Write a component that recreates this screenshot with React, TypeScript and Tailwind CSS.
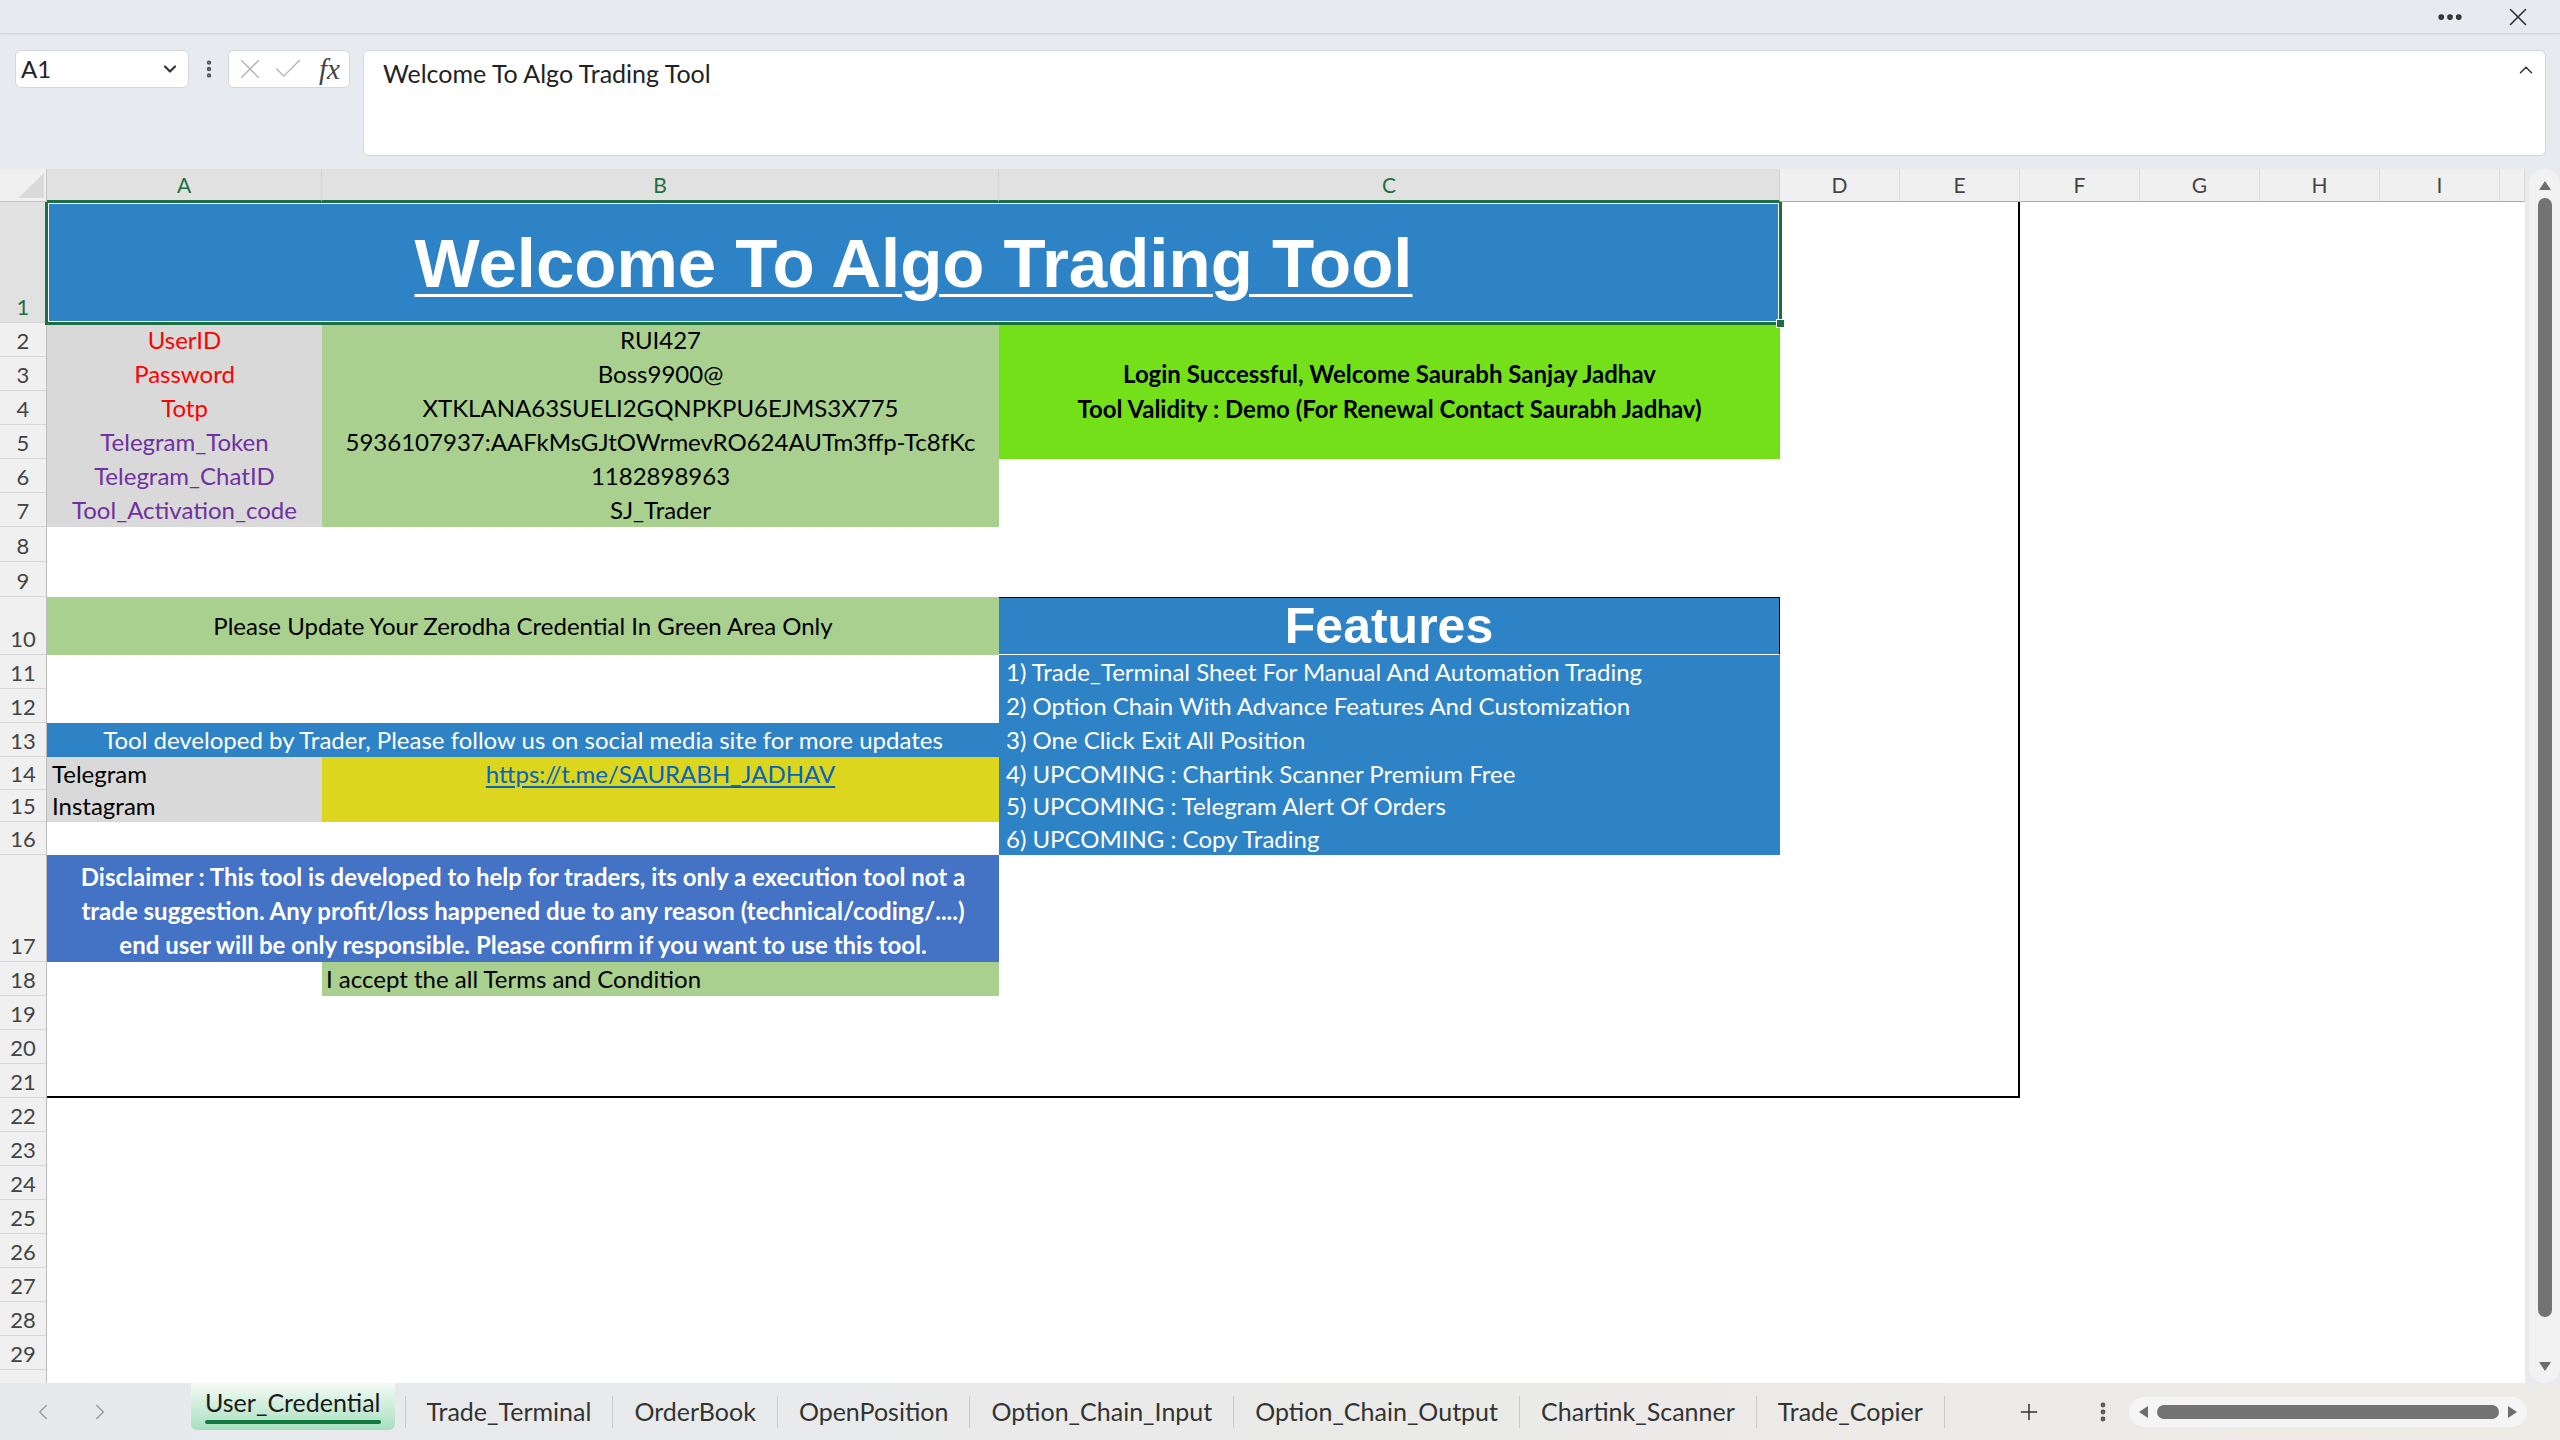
import { ChevronDown, ChevronUp, ChevronLeft, ChevronRight, X, Check, Plus, MoreHorizontal, MoreVertical } from 'lucide-react'

const columns = [
  { label: 'A', w: 'w-[275px]', sel: true },
  { label: 'B', w: 'w-[677px]', sel: true },
  { label: 'C', w: 'w-[781px]', sel: true },
  { label: 'D', w: 'w-[120px]', sel: false },
  { label: 'E', w: 'w-[120px]', sel: false },
  { label: 'F', w: 'w-[120px]', sel: false },
  { label: 'G', w: 'w-[120px]', sel: false },
  { label: 'H', w: 'w-[120px]', sel: false },
  { label: 'I', w: 'w-[120px]', sel: false },
  { label: '', w: 'w-[25px]', sel: false },
]

const rows = [
  { n: 1, h: 'h-[121px]' },
  { n: 2, h: 'h-[34px]' },
  { n: 3, h: 'h-[34px]' },
  { n: 4, h: 'h-[34px]' },
  { n: 5, h: 'h-[34px]' },
  { n: 6, h: 'h-[34px]' },
  { n: 7, h: 'h-[34px]' },
  { n: 8, h: 'h-[35px]' },
  { n: 9, h: 'h-[35px]' },
  { n: 10, h: 'h-[58px]' },
  { n: 11, h: 'h-[34px]' },
  { n: 12, h: 'h-[34px]' },
  { n: 13, h: 'h-[34px]' },
  { n: 14, h: 'h-[33px]' },
  { n: 15, h: 'h-[32px]' },
  { n: 16, h: 'h-[33px]' },
  { n: 17, h: 'h-[107px]' },
  { n: 18, h: 'h-[34px]' },
  { n: 19, h: 'h-[34px]' },
  { n: 20, h: 'h-[34px]' },
  { n: 21, h: 'h-[34px]' },
  { n: 22, h: 'h-[34px]' },
  { n: 23, h: 'h-[34px]' },
  { n: 24, h: 'h-[34px]' },
  { n: 25, h: 'h-[34px]' },
  { n: 26, h: 'h-[34px]' },
  { n: 27, h: 'h-[34px]' },
  { n: 28, h: 'h-[34px]' },
  { n: 29, h: 'h-[34px]' },
]

const credentials = [
  { label: 'UserID', value: 'RUI427', color: 'text-[#ff0000]' },
  { label: 'Password', value: 'Boss9900@', color: 'text-[#ff0000]' },
  { label: 'Totp', value: 'XTKLANA63SUELI2GQNPKPU6EJMS3X775', color: 'text-[#ff0000]' },
  { label: 'Telegram_Token', value: '5936107937:AAFkMsGJtOWrmevRO624AUTm3ffp-Tc8fKc', color: 'text-[#7030a0]' },
  { label: 'Telegram_ChatID', value: '1182898963', color: 'text-[#7030a0]' },
  { label: 'Tool_Activation_code', value: 'SJ_Trader', color: 'text-[#7030a0]' },
]

const features = [
  { text: '1) Trade_Terminal Sheet For Manual And Automation Trading', h: 'h-[34px]' },
  { text: '2) Option Chain With Advance Features And Customization', h: 'h-[34px]' },
  { text: '3) One Click Exit All Position', h: 'h-[34px]' },
  { text: '4) UPCOMING : Chartink Scanner Premium Free', h: 'h-[33px]' },
  { text: '5) UPCOMING : Telegram Alert Of Orders', h: 'h-[32px]' },
  { text: '6) UPCOMING : Copy Trading', h: 'h-[33px]' },
]

const sheets = ['Trade_Terminal', 'OrderBook', 'OpenPosition', 'Option_Chain_Input', 'Option_Chain_Output', 'Chartink_Scanner', 'Trade_Copier']

function TopBar() {
  return (
    <div className="h-[34px] shrink-0 flex items-center justify-end gap-[38px] pr-[27px] border-b border-[#d3d8de] shadow-[0_1px_2px_rgba(0,0,0,0.06)]">
      <MoreHorizontal size={30} strokeWidth={2.6} className="text-[#333]" />
      <X size={30} strokeWidth={1.3} className="text-[#333]" />
    </div>
  )
}

function FormulaBar() {
  return (
    <div className="h-[135px] shrink-0 flex items-start pt-[16px] pl-[15px]">
      <div className="w-[174px] h-[38px] bg-white border border-[#d4d7db] rounded-[6px] flex items-center justify-between pl-[5px] pr-[8px]">
        <span className="text-[24px] text-[#222]">A1</span>
        <ChevronDown size={20} strokeWidth={2.6} className="text-[#333]" />
      </div>
      <div className="w-[39px] h-[38px] flex items-center justify-center">
        <MoreVertical size={22} strokeWidth={2.8} className="text-[#555]" />
      </div>
      <div className="w-[122px] h-[38px] bg-white border border-[#d4d7db] rounded-[6px] flex items-center pl-[4px] gap-[4px]">
        <X size={34} strokeWidth={0.9} className="text-[#b0b0b0]" />
        <Check size={34} strokeWidth={0.9} className="text-[#b0b0b0]" />
        <span className="font-['Liberation_Serif',serif] italic text-[29px] text-[#444] leading-none ml-[10px]">fx</span>
      </div>
      <div className="ml-[13px] w-[2183px] h-[106px] bg-white border border-[#d4d7db] rounded-[6px] flex justify-between pl-[19px] pr-[8px] pt-[4px]">
        <span className="text-[25px] text-[#222]">Welcome To Algo Trading Tool</span>
        <ChevronUp size={22} strokeWidth={1.6} className="text-[#333] mt-[4px]" />
      </div>
    </div>
  )
}

function ColumnHeader() {
  return (
    <div className="h-[33px] shrink-0 flex">
      <div className="w-[47px] h-full bg-[#f0f0f0] border-r border-b border-[#c4c4c4]">
        <svg width="46" height="32" viewBox="0 0 46 32">
          <polygon points="44,4 44,29 18,29" fill="#dadada" />
        </svg>
      </div>
      {columns.map((c, i) => (
        <div
          key={i}
          className={
            c.sel
              ? `${c.w} h-full bg-[#e1e1e1] border-r border-r-[#d2d2d2] border-b-2 border-b-[#1e6e43] flex items-center justify-center text-[21px] text-[#1e6e43]`
              : `${c.w} h-full bg-[#f0f0f0] border-r border-r-[#dadada] border-b border-b-[#a9a9a9] flex items-center justify-center text-[21px] text-[#444]`
          }
        >
          {c.label}
        </div>
      ))}
    </div>
  )
}

function RowHeader() {
  return (
    <div className="w-[47px] shrink-0 flex flex-col bg-[#f0f0f0] border-r border-[#bdbdbd]">
      {rows.map((r) => (
        <div
          key={r.n}
          className={`${r.h} shrink-0 flex items-end justify-center pb-[4px] border-b border-[#d6d6d6] text-[22px] leading-none ${
            r.n === 1 ? 'bg-[#e1e1e1] text-[#1e6e43]' : 'text-[#444]'
          }`}
        >
          {r.n}
        </div>
      ))}
      <div className="flex-1" />
    </div>
  )
}

function Sheet() {
  return (
    <div className="flex-1 flex flex-col text-[24px] text-black">
      <div className="h-[896px] shrink-0 flex">
        <div className="w-[1973px] flex flex-col border-r-2 border-b-2 border-black">
          {/* Row 1: merged title A1:C1 (selected) */}
          <div className="h-[121px] shrink-0 flex">
            <div className="w-[1733px] relative bg-[#2e83c6] flex items-end justify-center pb-[25px]">
              <span className="font-['Liberation_Sans',Arial,sans-serif] font-bold text-[69px] leading-none text-white underline decoration-[3px] underline-offset-[7px]">
                Welcome To Algo Trading Tool
              </span>
              <div className="absolute -inset-[2px] border-[3px] border-[#1e6e43] pointer-events-none" />
              <div className="absolute inset-px border border-white pointer-events-none" />
              <div className="absolute -right-[5px] -bottom-[5px] w-[9px] h-[9px] bg-[#1e6e43] border border-white" />
            </div>
          </div>

          {/* Rows 2-7: credentials */}
          <div className="h-[204px] shrink-0 flex">
            <div className="w-[952px] flex flex-col">
              {credentials.map((c) => (
                <div key={c.label} className="h-[34px] flex">
                  <div className={`w-[275px] bg-[#d9d9d9] flex items-center justify-center ${c.color}`}>{c.label}</div>
                  <div className="w-[677px] bg-[#a9d08e] flex items-center justify-center">{c.value}</div>
                </div>
              ))}
            </div>
            <div className="w-[781px] flex flex-col">
              <div className="h-[136px] bg-[#74e01a] flex flex-col items-center justify-center font-bold leading-[35px]">
                <span>Login Successful, Welcome Saurabh Sanjay Jadhav</span>
                <span>Tool Validity : Demo (For Renewal Contact Saurabh Jadhav)</span>
              </div>
            </div>
          </div>

          {/* Rows 8-9 */}
          <div className="h-[70px] shrink-0" />

          {/* Rows 10-16 */}
          <div className="h-[258px] shrink-0 flex">
            <div className="w-[952px] flex flex-col">
              <div className="h-[58px] bg-[#a9d08e] flex items-center justify-center">
                Please Update Your Zerodha Credential In Green Area Only
              </div>
              <div className="h-[68px]" />
              <div className="h-[34px] bg-[#2e83c6] text-white flex items-center justify-center">
                Tool developed by Trader, Please follow us on social media site for more updates
              </div>
              <div className="h-[65px] flex">
                <div className="w-[275px] bg-[#d9d9d9] flex flex-col pl-[5px]">
                  <div className="h-[33px] flex items-center">Telegram</div>
                  <div className="h-[32px] flex items-center">Instagram</div>
                </div>
                <div className="w-[677px] bg-[#dcd61f] flex flex-col">
                  <div className="h-[33px] flex items-center justify-center">
                    <span className="text-[#0563c1] underline underline-offset-[3px]">https://t.me/SAURABH_JADHAV</span>
                  </div>
                </div>
              </div>
              <div className="h-[33px]" />
            </div>
            <div className="w-[781px] flex flex-col">
              <div className="h-[58px] bg-[#2e83c6] border-t border-r border-black border-b border-b-white flex items-center justify-center">
                <span className="font-['Liberation_Sans',Arial,sans-serif] font-bold text-[50px] leading-none text-white">Features</span>
              </div>
              <div className="h-[200px] bg-[#2e83c6] flex flex-col text-white pl-[7px]">
                {features.map((f) => (
                  <div key={f.text} className={`${f.h} flex items-center`}>
                    {f.text}
                  </div>
                ))}
              </div>
            </div>
          </div>

          {/* Row 17: disclaimer */}
          <div className="h-[107px] shrink-0 flex">
            <div className="w-[952px] bg-[#4472c4] flex flex-col items-center justify-center pt-[5px] text-white font-bold leading-[34px]">
              <span>Disclaimer : This tool is developed to help for traders, its only a execution tool not a</span>
              <span>trade suggestion. Any profit/loss happened due to any reason (technical/coding/....)</span>
              <span>end user will be only responsible. Please confirm if you want to use this tool.</span>
            </div>
          </div>

          {/* Row 18 */}
          <div className="h-[34px] shrink-0 flex">
            <div className="w-[275px]" />
            <div className="w-[677px] bg-[#a9d08e] flex items-center pl-[4px]">I accept the all Terms and Condition</div>
          </div>

          {/* Rows 19-21 */}
          <div className="flex-1" />
        </div>
        <div className="flex-1" />
      </div>
      <div className="flex-1" />
    </div>
  )
}

function VScroll() {
  return (
    <div className="w-[35px] shrink-0 flex justify-end">
      <div className="w-[31px] h-full bg-[#f2f2f2] rounded-t-[16px] rounded-b-[16px] flex flex-col items-center">
        <svg width="14" height="11" viewBox="0 0 14 11" className="mt-[11px]">
          <polygon points="7,1 13,10 1,10" fill="#6e6e6e" />
        </svg>
        <div className="w-[14px] h-[1119px] mt-[7px] rounded-full bg-[#737373]" />
        <svg width="14" height="11" viewBox="0 0 14 11" className="mt-[44px]">
          <polygon points="1,1 13,1 7,10" fill="#6e6e6e" />
        </svg>
      </div>
    </div>
  )
}

function TabBar() {
  return (
    <div className="h-[57px] shrink-0 flex items-center bg-linear-to-r from-[#e6e9ec] to-[#eeebe6] text-[25px] text-[#333]">
      <div className="flex items-center pl-[30px] gap-[31px] text-[#9a9a9a]">
        <ChevronLeft size={26} strokeWidth={1.3} />
        <ChevronRight size={26} strokeWidth={1.3} />
      </div>
      <div className="ml-[78px] self-start h-[47px] px-[14px] rounded-b-[6px] bg-linear-to-b from-[#f4fbf7] to-[#a6dfbd] flex flex-col items-center justify-end pb-[6px] text-[#1b1b1b]">
        <span className="leading-[30px]">User_Credential</span>
        <div className="w-full h-[4px] mt-[3px] rounded-full bg-[#107c41]" />
      </div>
      <div className="w-[10px]" />
      {sheets.map((s) => (
        <div key={s} className="flex items-center">
          <div className="w-px h-[32px] bg-[#cacaca]" />
          <span className="px-[21px]">{s}</span>
        </div>
      ))}
      <div className="w-px h-[32px] bg-[#cacaca]" />
      <div className="ml-auto flex items-center pr-[33px]">
        <Plus size={26} strokeWidth={1.4} className="text-[#333]" />
        <MoreVertical size={24} strokeWidth={2.8} className="text-[#555] ml-[49px]" />
        <div className="ml-[14px] w-[398px] h-[30px] rounded-full bg-[#f5f5f5] flex items-center px-[9px] gap-[8px]">
          <svg width="11" height="14" viewBox="0 0 11 14">
            <polygon points="10,1 10,13 1,7" fill="#6e6e6e" />
          </svg>
          <div className="flex-1 h-[14px] rounded-full bg-[#737373]" />
          <svg width="11" height="14" viewBox="0 0 11 14">
            <polygon points="1,1 10,7 1,13" fill="#6e6e6e" />
          </svg>
        </div>
      </div>
    </div>
  )
}

export default function App() {
  return (
    <div className="w-[2560px] h-[1440px] overflow-hidden flex flex-col bg-[#e7ebef] font-['Lato',sans-serif] text-[#222]">
      <TopBar />
      <FormulaBar />
      <div className="h-[1214px] shrink-0 flex">
        <div className="w-[2525px] flex flex-col bg-white">
          <ColumnHeader />
          <div className="flex flex-1 overflow-hidden">
            <RowHeader />
            <Sheet />
          </div>
        </div>
        <VScroll />
      </div>
      <TabBar />
    </div>
  )
}
